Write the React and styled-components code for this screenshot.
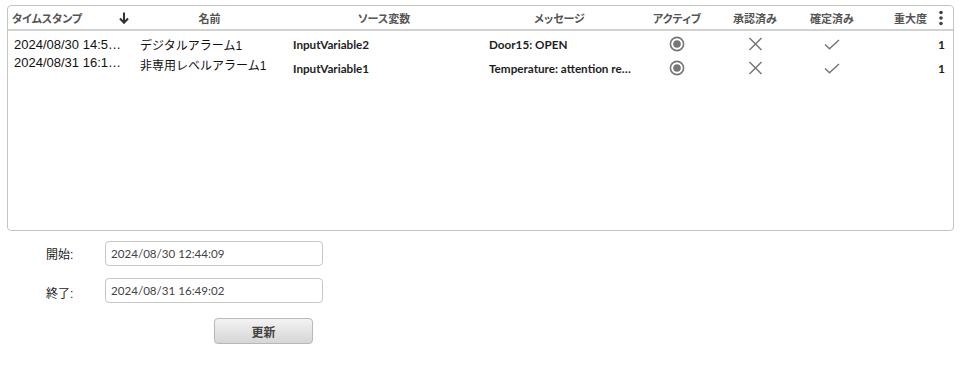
import React from "react";
import styled, { createGlobalStyle } from "styled-components";

const GlobalStyle = createGlobalStyle`
  html, body {
    margin: 0;
    padding: 0;
    background: #ffffff;
  }
  body {
    font-family: "Liberation Sans", "Noto Sans CJK JP", sans-serif;
    color: #222;
  }
`;

const COLS = "125px 153px 196px 155px 80px 76px 78px 1fr";

const Page = styled.div`
  padding: 5px 6px 0 7px;
`;

const TableBox = styled.div`
  width: 945px;
  height: 224px;
  border: 1px solid #c4c4c4;
  border-radius: 4px;
  overflow: hidden;
`;

const HeaderRow = styled.div`
  display: grid;
  grid-template-columns: ${COLS};
  height: 23px;
  border-bottom: 2px solid #d2d2d2;
`;

const HeadCell = styled.div`
  display: flex;
  align-items: center;
  justify-content: ${(p) => p.$justify || "center"};
  gap: ${(p) => p.$gap || 0}px;
  padding: ${(p) => p.$pad || "0"};
  font-family: "Noto Sans CJK JP", sans-serif;
  font-feature-settings: "palt";
  font-size: 11px;
  font-weight: 700;
  color: #555;
  white-space: nowrap;
`;

const Body = styled.div`
  padding-top: 1px;
`;

const Row = styled.div`
  display: grid;
  grid-template-columns: ${COLS};
  height: 24px;
  align-items: center;
`;

const Cell = styled.div`
  padding: 0 7px;
  white-space: nowrap;
  overflow: hidden;
  text-overflow: ellipsis;
  font-size: ${(p) => (p.$size || 12)}px;
  font-family: ${(p) =>
    p.$bold
      ? `"Lato", "Noto Sans CJK JP", sans-serif`
      : `"Liberation Sans", "Noto Sans CJK JP", sans-serif`};
  font-weight: ${(p) => (p.$bold ? 700 : 400)};
  color: ${(p) => (p.$bold ? "#1e1e1e" : "#111")};
  text-align: ${(p) => p.$align || "left"};
  transform: translateY(${(p) => p.$shift || 0}px);
`;

const IconCell = styled.div`
  display: flex;
  justify-content: center;
  align-items: center;
`;

const Form = styled.div`
  display: grid;
  grid-template-columns: 59px 218px;
  row-gap: 12px;
  padding: 10px 0 0 39px;
  align-items: center;
`;

const Label = styled.div`
  font-size: 12px;
  color: #222;
  transform: translateY(${(p) => p.$shift || 0}px);
`;

const Field = styled.input`
  box-sizing: border-box;
  width: 218px;
  height: 25px;
  border: 1px solid #c6c6c6;
  border-radius: 4px;
  padding: 0 5px;
  font-family: "Lato", sans-serif;
  font-size: 11.6px;
  color: #444;
  background: #fff;
  outline: none;
`;

const ButtonRow = styled.div`
  grid-column: 2;
  padding-left: 109px;
  margin-top: 3px;
`;

const Button = styled.button`
  width: 99px;
  height: 26px;
  border: 1px solid #b8b8b8;
  border-radius: 4px;
  background: linear-gradient(#f3f3f3, #d6d6d6);
  box-shadow: 0 1px 1px rgba(0, 0, 0, 0.08);
  font-family: "Noto Sans CJK JP", sans-serif;
  font-size: 12px;
  font-weight: 700;
  color: #444;
  padding: 0;
`;

const SortArrow = () => (
  <svg width="10" height="12" viewBox="0 0 10 12">
    <path d="M5 0.5v10" stroke="#333" strokeWidth="2" />
    <path d="M1 6.5L5 10.8L9 6.5" stroke="#333" strokeWidth="2" fill="none" />
  </svg>
);

const Kebab = () => (
  <svg width="4" height="16" viewBox="0 0 4 16">
    <circle cx="2" cy="2.5" r="1.8" fill="#444" />
    <circle cx="2" cy="8" r="1.8" fill="#444" />
    <circle cx="2" cy="13.5" r="1.8" fill="#444" />
  </svg>
);

const RadioIcon = () => (
  <svg width="16" height="16" viewBox="0 0 16 16">
    <circle cx="8" cy="8" r="6.6" stroke="#777" strokeWidth="1.6" fill="none" />
    <circle cx="8" cy="8" r="3.8" fill="#777" />
  </svg>
);

const CrossIcon = () => (
  <svg width="15" height="14" viewBox="0 0 15 14">
    <path d="M1.5 1L13.5 13M13.5 1L1.5 13" stroke="#777" strokeWidth="1.5" />
  </svg>
);

const CheckIcon = () => (
  <svg width="16" height="11" viewBox="0 0 16 11">
    <path d="M1 5.5L5.5 9.8L15 1" stroke="#777" strokeWidth="1.5" fill="none" />
  </svg>
);

const alarms = [
  {
    time: "2024/08/30 14:52:17",
    name: "デジタルアラーム1",
    source: "InputVariable2",
    message: "Door15: OPEN",
    severity: 1,
    shift: [0, 0],
  },
  {
    time: "2024/08/31 16:10:44",
    name: "非専用レベルアラーム1",
    source: "InputVariable1",
    message: "Temperature: attention required",
    severity: 1,
    shift: [-6, -4],
  },
];

export default function App() {
  return (
    <Page>
      <GlobalStyle />
      <TableBox>
        <HeaderRow>
          <HeadCell $justify="space-between" $pad="0 4px 0 4px">
            <span>タイムスタンプ</span>
            <SortArrow />
          </HeadCell>
          <HeadCell>名前</HeadCell>
          <HeadCell>ソース変数</HeadCell>
          <HeadCell>メッセージ</HeadCell>
          <HeadCell>アクティブ</HeadCell>
          <HeadCell>承認済み</HeadCell>
          <HeadCell>確定済み</HeadCell>
          <HeadCell $justify="flex-end" $gap={12} $pad="0 10px 0 0">
            <span>重大度</span>
            <Kebab />
          </HeadCell>
        </HeaderRow>
        <Body>
          {alarms.map((a) => (
            <Row key={a.time}>
              <Cell $size={13} $shift={a.shift[0]} style={{ paddingLeft: 6 }}>
                {a.time}
              </Cell>
              <Cell $shift={a.shift[1]}>{a.name}</Cell>
              <Cell $bold $size={11.7}>{a.source}</Cell>
              <Cell $bold $size={11.7} style={{ paddingRight: 4 }}>
                {a.message}
              </Cell>
              <IconCell>
                <RadioIcon />
              </IconCell>
              <IconCell>
                <CrossIcon />
              </IconCell>
              <IconCell>
                <CheckIcon />
              </IconCell>
              <Cell $bold $align="right" style={{ paddingRight: 8 }}>
                {a.severity}
              </Cell>
            </Row>
          ))}
        </Body>
      </TableBox>
      <Form>
        <Label>開始:</Label>
        <Field defaultValue="2024/08/30 12:44:09" />
        <Label $shift={2}>終了:</Label>
        <Field defaultValue="2024/08/31 16:49:02" />
        <ButtonRow>
          <Button>更新</Button>
        </ButtonRow>
      </Form>
    </Page>
  );
}
